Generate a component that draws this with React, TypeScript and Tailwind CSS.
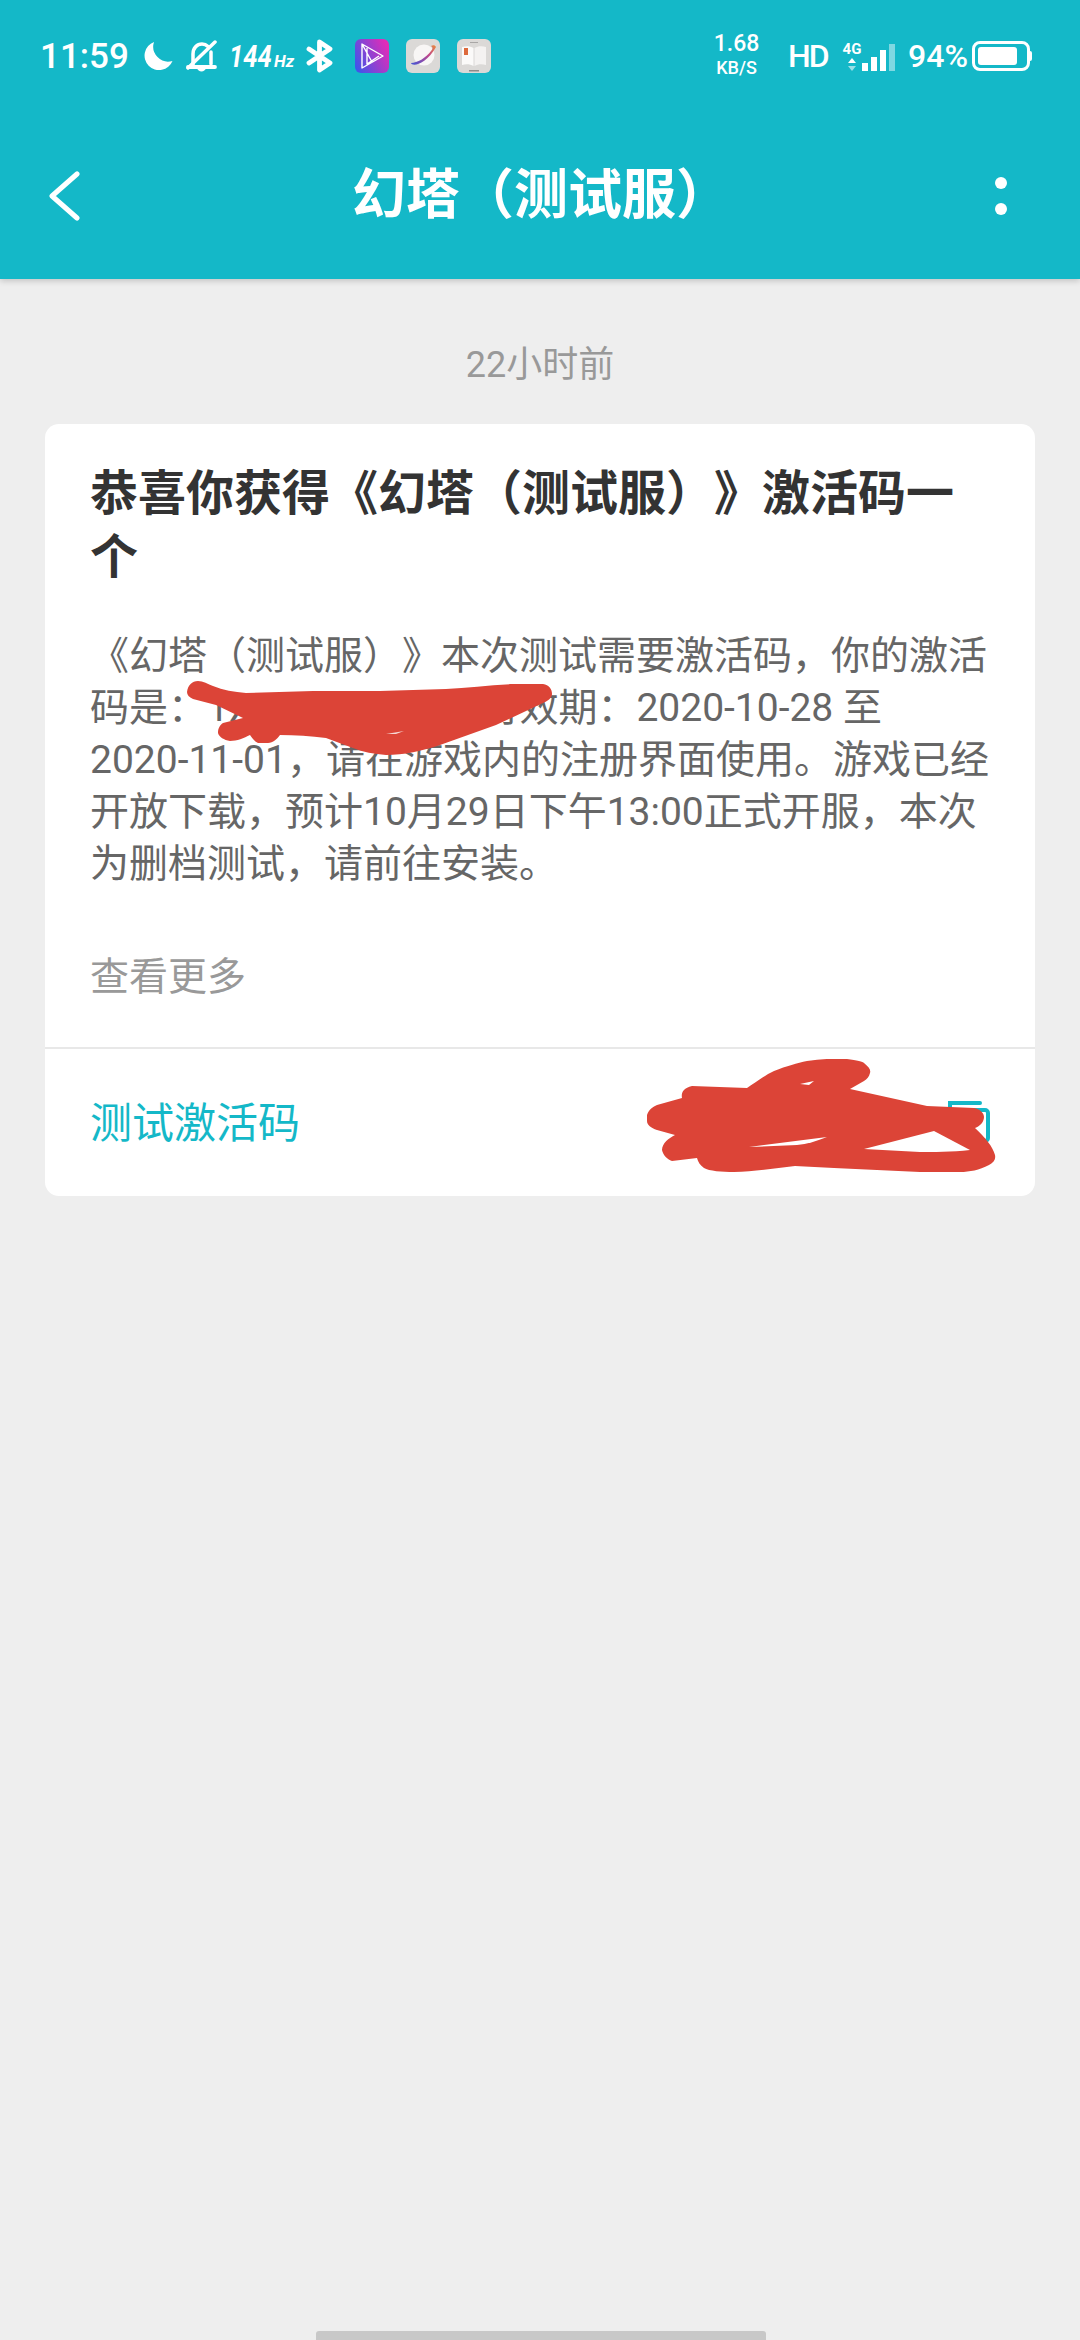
const cjk = "font-['Roboto','Noto_Sans_CJK_SC',sans-serif] [text-spacing-trim:space-all]";

function StatusLeft() {
  return (
    <div className="flex items-center text-white">
      <span className="w-[103px] text-[35px] font-medium leading-none">11:59</span>
      {/* moon */}
      <svg width="30" height="30" viewBox="0 0 30 30" className="mr-[13px]">
        <path d="M11 1 A14.5 14.5 0 1 0 29.5 20 A15 15 0 0 1 11 1 Z" fill="#fff" />
      </svg>
      {/* bell off */}
      <svg width="31" height="32" viewBox="0 0 31 32" className="mr-[12px]" fill="none" stroke="#fff" strokeWidth="3.500" strokeLinecap="round">
        <path d="M7 25 V14 C7 8 11 4 16 4 C18.500 4 20.500 5 22 6.500" />
        <path d="M25 12 V24" />
        <path d="M2 27 H29" strokeWidth="3.800" />
        <path d="M2 28 L29 2" />
        <path d="M11 28 C12 32.500 19 32.500 20 28 Z" fill="#fff" stroke="none" />
      </svg>
      <span className="mr-[14px] flex w-[63px] items-baseline font-bold italic leading-none">
        <span className="inline-block w-[44px] origin-left scale-x-[0.8] text-[32px]">144</span>
        <span className="ml-[1px] text-[17px]">Hz</span>
      </span>
      {/* bluetooth */}
      <svg width="27" height="34" viewBox="0 0 27 34" className="mr-[22px]" fill="none" stroke="#fff" strokeWidth="4.800" strokeLinejoin="round" strokeLinecap="round">
        <path d="M3 10 L24 24 L13.500 31 V3 L24 10 L3 24" />
      </svg>
      {/* video app */}
      <svg width="34" height="34" viewBox="0 0 34 34" className="mr-[17px]">
        <defs>
          <linearGradient id="vid" x1="0" y1="0.8" x2="1" y2="0.3">
            <stop offset="0" stopColor="#3f55ea" />
            <stop offset="1" stopColor="#e22cb8" />
          </linearGradient>
          <linearGradient id="ring" x1="0" y1="1" x2="1" y2="0">
            <stop offset="0" stopColor="#3f55d8" />
            <stop offset="0.6" stopColor="#c0468c" />
            <stop offset="1" stopColor="#ea8a3c" />
          </linearGradient>
        </defs>
        <rect width="34" height="34" rx="6" fill="url(#vid)" />
        <path d="M7 5 L28 17 L7 29 Z M12 9 V25 L24 17 M7 5 L17 23" fill="none" stroke="#fff" strokeWidth="1.400" strokeLinejoin="round" />
      </svg>
      {/* browser app */}
      <svg width="34" height="34" viewBox="0 0 34 34" className="mr-[17px]">
        <rect width="34" height="34" rx="6" fill="#dbd9d7" />
        <circle cx="18" cy="16" r="10.500" fill="#f8f6f5" />
        <path d="M5 24 C6 28 20 26 30 8 C29 6 27 6 25 7 C27 8 27 10 25 12 C20 19 11 24 5 24 Z" fill="url(#ring)" />
      </svg>
      {/* book app */}
      <svg width="34" height="34" viewBox="0 0 34 34">
        <rect width="34" height="34" rx="6" fill="#dbd9d7" />
        <path d="M5 8 C9 7 13 7 16.500 9 V27 C13 25 9 25 5 26 Z" fill="#fbfaf9" />
        <path d="M17.500 9 C21 7 25 7 29 8 V26 C25 25 21 25 17.500 27 Z" fill="#f4f2f1" />
        <rect x="7" y="9" width="4" height="7" fill="#dd6a3c" />
        <rect x="12" y="31" width="10" height="1.500" fill="#8d8b8a" />
        <rect x="13" y="3" width="8" height="1" fill="#a9a7a6" />
      </svg>
    </div>
  );
}

function StatusRight() {
  return (
    <div className="flex items-center text-white">
      <div className="mr-[28px] flex w-[47px] flex-col items-center font-medium leading-none">
        <span className="text-[23px] leading-[24px]">1.68</span>
        <span className="text-[18px] leading-[24px]">KB/S</span>
      </div>
      <span className="mr-[14px] w-[40px] whitespace-nowrap text-[32px] font-medium leading-none tracking-[-2px]">HD</span>
      <div className="mr-[13px] flex h-[30px] w-[53px] items-end">
        <div className="flex w-[21px] flex-col items-center">
          <span className="text-[15px] font-bold leading-[15px]">4G</span>
          <svg width="8" height="13" viewBox="0 0 8 13" className="mt-[1px]">
            <path d="M4 0 L8 5 H0 Z" fill="#fff" />
            <path d="M4 13 L8 8 H0 Z" fill="#9be0e7" />
          </svg>
        </div>
        <div className="flex h-[27px] items-end gap-[3px]">
          <span className="h-[8px] w-[6px] bg-white" />
          <span className="h-[14px] w-[6px] bg-white" />
          <span className="h-[21px] w-[6px] bg-white" />
          <span className="h-[27px] w-[6px] bg-[#7fd8e2]" />
        </div>
      </div>
      <span className="mr-[4px] w-[60px] text-[32px] font-medium leading-none">94%</span>
      <div className="flex items-center">
        <div className="flex h-[30px] w-[58px] items-center rounded-[8px] border-[3px] border-white px-[3px]">
          <div className="h-[18px] w-[39px] rounded-[3px] bg-white" />
        </div>
        <div className="h-[10px] w-[2px] rounded-r-sm bg-white" />
      </div>
    </div>
  );
}

function Scribbles() {
  return (
    <>
      {/* redaction over the code */}
      <svg width="368" height="76" viewBox="0 0 368 76" className="absolute left-[187px] top-[681px]">
        <path
          d="M0 11 C1 4 5 0 11 0 C16 0 21 3 26 5 C36 9 47 11 59 12 L126 10 L193 10 L259 8 C280 7 303 4 326 3 L356 3 C362 4 365 8 365 13 C365 17 361 20 356 22 L309 44 L253 64 C235 70 217 74 199 74 C187 73 176 71 166 67 L139 57 C124 55 108 54 93 54 C90 58 86 62 81 62 L71 62 C67 60 65 57 63 54 C57 57 50 60 43 60 C37 59 32 56 31 52 C31 47 33 44 36 42 L56 37 L29 24 L6 18 C2 16 0 14 0 11 Z"
          fill="#dc4437"
        />
        <path d="M199 53 L217 50 L209 53 Z" fill="#f6d8d4" />
      </svg>
      {/* redaction over the footer value */}
      <svg width="350" height="116" viewBox="0 0 350 116" className="absolute left-[647px] top-[1059px]">
        <path
          d="M0 56 C2 50 6 48 10 46 L35 39 C34 34 36 29 45 27 L100 29 C108 24 118 16 127 12 C140 7 150 4 160 2 C175 0 190 -1 200 0 C210 1 216 3 217 4 C222 8 224 11 223 14 C222 18 220 20 217 22 L203 30 L280 47 L327 49 C333 50 337 54 337 58 C337 63 333 67 328 69 C338 78 346 88 348 96 C349 101 346 104 342 106 C332 111 323 113 313 113 L273 113 L187 109 L148 107 C128 109 107 113 87 113 C75 113 62 112 57 109 C53 106 51 103 50 99 L25 102 C20 100 16 96 15 91 C15 84 22 79 28 76 L10 71 C4 69 0 66 0 62 Z"
          fill="#dc4437"
        />
        <path d="M153 25 L167 22 L162 26 Z" fill="#fff" />
        <path d="M102 88 L180 78 C170 82 160 85 150 86 Z" fill="#fff" />
        <path d="M217 90 L287 72 L323 91 C305 93 285 93 273 93 Z" fill="#fff" />
      </svg>
    </>
  );
}

export default function App() {
  return (
    <div className={`${cjk} relative flex h-[2340px] w-[1080px] flex-col overflow-hidden bg-[#eeeeee]`}>
      {/* Header */}
      <header className="z-10 h-[279px] bg-[#14b8c8] shadow-[0_2px_6px_rgba(0,0,0,0.18)]">
        <div className="flex h-[112px] items-center justify-between pl-[40px] pr-[48px]">
          <StatusLeft />
          <StatusRight />
        </div>
        <div className="flex h-[167px] items-center justify-between pl-[47px] pr-[73px]">
          <svg width="34" height="50" viewBox="0 0 34 50" fill="none" stroke="#fff" strokeWidth="5" strokeLinecap="round" strokeLinejoin="round" className="mr-[6px]">
            <path d="M30 3 L5 25 L30 47" />
          </svg>
          <h1 className="text-[54px] font-bold leading-none text-white">幻塔（测试服）</h1>
          <div className="flex flex-col gap-[14px]">
            <span className="h-[12px] w-[12px] rounded-full bg-white" />
            <span className="h-[12px] w-[12px] rounded-full bg-white" />
          </div>
        </div>
      </header>

      {/* Timestamp */}
      <div className="flex h-[145px] justify-center pt-[64px]">
        <span className="text-[36px] leading-[44px] text-[#999999]">22小时前</span>
      </div>

      {/* Card */}
      <section className="mx-[45px] h-[772px] rounded-[14px] bg-white">
        <div className="h-[623px] px-[45px] pt-[38px]">
          <h2 className="text-[48px] font-bold leading-[64px] text-[#333333]">
            <span className="block whitespace-nowrap">恭喜你获得《幻塔（测试服）》激活码一</span>
            <span className="block">个</span>
          </h2>
          <div className="mt-[40px] text-[39px] leading-[52px] text-[#666666]">
            <p className="whitespace-nowrap">《幻塔（测试服）》本次测试需要激活码，你的激活</p>
            <p className="whitespace-nowrap">码是：1XXXXXX111，有效期：2020-10-28 至</p>
            <p className="whitespace-nowrap">2020-11-01，请在游戏内的注册界面使用。游戏已经</p>
            <p className="whitespace-nowrap">开放下载，预计10月29日下午13:00正式开服，本次</p>
            <p className="whitespace-nowrap">为删档测试，请前往安装。</p>
          </div>
          <p className="mt-[61px] text-[39px] leading-[52px] text-[#999999]">查看更多</p>
        </div>
        <div className="flex h-[149px] items-center justify-between border-t-2 border-[#e8e8e8] pl-[45px] pr-[45px] pt-[2px]">
          <span className="text-[42px] leading-none text-[#14b8c8]">测试激活码</span>
          <div className="flex items-center gap-[23px]">
            <span className="text-[39px] leading-none text-[#666666]">XXXXXXXXXX</span>
            <svg width="42" height="42" viewBox="0 0 42 42" fill="none" stroke="#14b8c8" strokeWidth="4" className="-mt-[4px]">
              <path d="M2 32 V2 H32" strokeLinecap="round" />
              <rect x="8" y="9" width="32" height="31" rx="3" />
            </svg>
          </div>
        </div>
      </section>

      <Scribbles />

      {/* Home indicator */}
      <div className="absolute bottom-0 left-[316px] h-[9px] w-[450px] rounded-t-[3px] bg-[#c8c8c8]" />
    </div>
  );
}
